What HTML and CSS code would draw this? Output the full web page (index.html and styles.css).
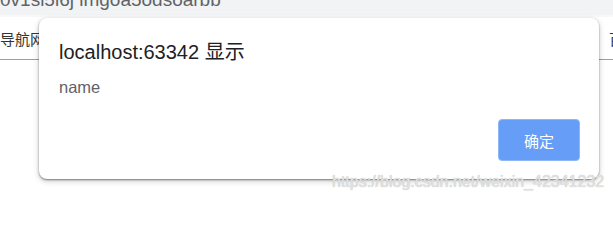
FILE: index.html
```html
<!DOCTYPE html>
<html lang="zh">
<head>
<meta charset="utf-8">
<link rel="stylesheet" href="styles.css">
</head>
<body>
<div class="tabstrip"><span class="tabtext">0v1si5i6j imgoa5odsoarbb</span></div>
<div class="nav">
  <span class="nav-left">导航网站</span>
  <span class="nav-right"><span>百度</span></span>
</div>
<div class="dialog">
  <div class="title">localhost:63342 显示</div>
  <div class="message">name</div>
  <div class="actions"><button class="ok">确定</button></div>
</div>
<div class="watermark">https://blog.csdn.net/weixin_42341232</div>
</body>
</html>
```
FILE: styles.css
```css
html, body {
  margin: 0;
  padding: 0;
  background: #fff;
  width: 613px;
  height: 200px;
  overflow: hidden;
}
body {
  font-family: "Liberation Sans", "Noto Sans CJK SC", sans-serif;
  position: relative;
}
.tabstrip {
  height: 15px;
  background: #f1f3f4;
  border-bottom: 2px solid #f7f8f9;
  overflow: hidden;
}
.tabtext {
  display: block;
  font-size: 19px;
  line-height: 19px;
  margin-top: -10px;
  color: #5f6368;
  white-space: nowrap;
}
.nav {
  display: flex;
  justify-content: space-between;
  align-items: center;
  height: 42px;
  border-bottom: 1px solid #9e9e9e;
  font-family: "Noto Sans CJK SC", sans-serif;
  font-size: 15px;
  color: #333;
}
.nav-left {
  margin-top: 1px;
}
.nav-right {
  width: 4px;
  overflow: hidden;
  white-space: nowrap;
  margin-top: 1px;
}
.dialog {
  position: absolute;
  left: 39px;
  top: 18px;
  width: 560px;
  box-sizing: border-box;
  padding: 22px 19px 18px 20px;
  background: #fff;
  border-radius: 8px;
  box-shadow: 0 1px 2px rgba(0,0,0,0.45), 0 2px 6px rgba(0,0,0,0.2);
  display: flex;
  flex-direction: column;
}
.title {
  font-size: 20px;
  line-height: 24px;
  color: #202124;
}
.message {
  margin-top: 13px;
  font-size: 16.5px;
  line-height: 20px;
  color: #5f6368;
}
.actions {
  display: flex;
  justify-content: flex-end;
  margin-top: 22px;
}
.ok {
  width: 82px;
  height: 42px;
  border: 1px solid #8fb6f7;
  border-radius: 4px;
  background: #669df6;
  color: #fff;
  font-family: "Noto Sans CJK SC", sans-serif;
  font-size: 15px;
  padding: 0;
}
.watermark {
  position: absolute;
  left: 332px;
  top: 172px;
  font-size: 16px;
  line-height: 20px;
  color: #e2e2e2;
  text-shadow: 0 0 1px #b8b8b8;
  white-space: nowrap;
}
```
